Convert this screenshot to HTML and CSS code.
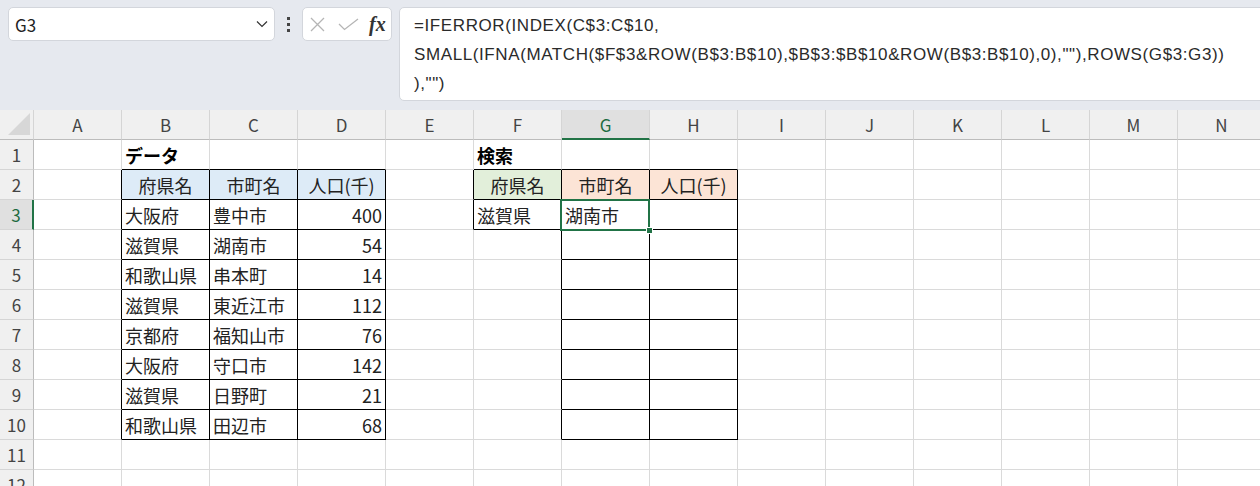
FILE: index.html
```html
<!DOCTYPE html>
<html lang="ja">
<head>
    <meta charset="UTF-8">
    <title>Sheet1</title>
    <link rel="stylesheet" href="styles.css">
</head>
<body>
<div class="topbar">
    <div class="namebox">
        <span>G3</span>
        <svg width="12" height="8" viewBox="0 0 12 8"><polyline points="1,1.5 6,6.5 11,1.5" fill="none" stroke="#333" stroke-width="1.2"/></svg>
    </div>
    <div class="grip"><i></i><i></i><i></i></div>
    <div class="fxbox">
        <svg class="cancel" width="15" height="15" viewBox="0 0 15 15"><path d="M1 1L14 14M14 1L1 14" stroke="#b5b5b5" stroke-width="1.3"/></svg>
        <svg class="enter" width="21" height="13" viewBox="0 0 21 13"><polyline points="1,6 6.5,11.5 20,1" fill="none" stroke="#b5b5b5" stroke-width="1.3"/></svg>
        <span class="fx">fx</span>
    </div>
    <div class="formula">
        <div>=IFERROR(INDEX(C$3:C$10,</div>
        <div>SMALL(IFNA(MATCH($F$3&amp;ROW(B$3:B$10),$B$3:$B$10&amp;ROW(B$3:B$10),0),""),ROWS(G$3:G3))</div>
        <div>),"")</div>
    </div>
</div>

<div class="sheet">
    <!-- 列見出し -->
    <div class="row">
        <div class="hd corner"></div>
        <div class="hd">A</div><div class="hd">B</div><div class="hd">C</div><div class="hd">D</div>
        <div class="hd">E</div><div class="hd">F</div><div class="hd sel">G</div><div class="hd">H</div>
        <div class="hd">I</div><div class="hd">J</div><div class="hd">K</div><div class="hd">L</div>
        <div class="hd">M</div><div class="hd">N</div>
    </div>

    <div class="row">
        <div class="rh">1</div>
        <div class="c"></div><div class="c bb b">データ</div><div class="c bb"></div><div class="c bb"></div>
        <div class="c"></div><div class="c bb b">検索</div><div class="c bb"></div><div class="c bb"></div>
        <div class="c"></div><div class="c"></div><div class="c"></div><div class="c"></div><div class="c"></div><div class="c"></div>
    </div>

    <div class="row">
        <div class="rh">2</div>
        <div class="c br"></div>
        <div class="c bk blue ctr">府県名</div><div class="c bk blue ctr">市町名</div><div class="c bk blue ctr">人口(千)</div>
        <div class="c br"></div>
        <div class="c bk green ctr">府県名</div><div class="c bk orange ctr">市町名</div><div class="c bk orange ctr">人口(千)</div>
        <div class="c"></div><div class="c"></div><div class="c"></div><div class="c"></div><div class="c"></div><div class="c"></div>
    </div>

    <div class="row">
        <div class="rh sel">3</div>
        <div class="c br"></div>
        <div class="c bk">大阪府</div><div class="c bk">豊中市</div><div class="c bk num">400</div>
        <div class="c br"></div>
        <div class="c bk">滋賀県</div><div class="c bk active">湖南市</div><div class="c bk"></div>
        <div class="c"></div><div class="c"></div><div class="c"></div><div class="c"></div><div class="c"></div><div class="c"></div>
    </div>

    <div class="row">
        <div class="rh">4</div>
        <div class="c br"></div>
        <div class="c bk">滋賀県</div><div class="c bk">湖南市</div><div class="c bk num">54</div>
        <div class="c"></div><div class="c br"></div><div class="c bk"></div><div class="c bk"></div>
        <div class="c"></div><div class="c"></div><div class="c"></div><div class="c"></div><div class="c"></div><div class="c"></div>
    </div>

    <div class="row">
        <div class="rh">5</div>
        <div class="c br"></div>
        <div class="c bk">和歌山県</div><div class="c bk">串本町</div><div class="c bk num">14</div>
        <div class="c"></div><div class="c br"></div><div class="c bk"></div><div class="c bk"></div>
        <div class="c"></div><div class="c"></div><div class="c"></div><div class="c"></div><div class="c"></div><div class="c"></div>
    </div>

    <div class="row">
        <div class="rh">6</div>
        <div class="c br"></div>
        <div class="c bk">滋賀県</div><div class="c bk">東近江市</div><div class="c bk num">112</div>
        <div class="c"></div><div class="c br"></div><div class="c bk"></div><div class="c bk"></div>
        <div class="c"></div><div class="c"></div><div class="c"></div><div class="c"></div><div class="c"></div><div class="c"></div>
    </div>

    <div class="row">
        <div class="rh">7</div>
        <div class="c br"></div>
        <div class="c bk">京都府</div><div class="c bk">福知山市</div><div class="c bk num">76</div>
        <div class="c"></div><div class="c br"></div><div class="c bk"></div><div class="c bk"></div>
        <div class="c"></div><div class="c"></div><div class="c"></div><div class="c"></div><div class="c"></div><div class="c"></div>
    </div>

    <div class="row">
        <div class="rh">8</div>
        <div class="c br"></div>
        <div class="c bk">大阪府</div><div class="c bk">守口市</div><div class="c bk num">142</div>
        <div class="c"></div><div class="c br"></div><div class="c bk"></div><div class="c bk"></div>
        <div class="c"></div><div class="c"></div><div class="c"></div><div class="c"></div><div class="c"></div><div class="c"></div>
    </div>

    <div class="row">
        <div class="rh">9</div>
        <div class="c br"></div>
        <div class="c bk">滋賀県</div><div class="c bk">日野町</div><div class="c bk num">21</div>
        <div class="c"></div><div class="c br"></div><div class="c bk"></div><div class="c bk"></div>
        <div class="c"></div><div class="c"></div><div class="c"></div><div class="c"></div><div class="c"></div><div class="c"></div>
    </div>

    <div class="row">
        <div class="rh">10</div>
        <div class="c br"></div>
        <div class="c bk">和歌山県</div><div class="c bk">田辺市</div><div class="c bk num">68</div>
        <div class="c"></div><div class="c br"></div><div class="c bk"></div><div class="c bk"></div>
        <div class="c"></div><div class="c"></div><div class="c"></div><div class="c"></div><div class="c"></div><div class="c"></div>
    </div>

    <div class="row">
        <div class="rh">11</div>
        <div class="c"></div><div class="c"></div><div class="c"></div><div class="c"></div><div class="c"></div><div class="c"></div><div class="c"></div>
        <div class="c"></div><div class="c"></div><div class="c"></div><div class="c"></div><div class="c"></div><div class="c"></div><div class="c"></div>
    </div>

    <div class="row">
        <div class="rh">12</div>
        <div class="c"></div><div class="c"></div><div class="c"></div><div class="c"></div><div class="c"></div><div class="c"></div><div class="c"></div>
        <div class="c"></div><div class="c"></div><div class="c"></div><div class="c"></div><div class="c"></div><div class="c"></div><div class="c"></div>
    </div>
</div>
</body>
</html>
```

FILE: styles.css
```css
body {
    margin: 0;
    height: 486px;
    overflow: hidden;
    background: #fff;
    font-family: "Noto Sans CJK JP", sans-serif;
    color: #222;
}

/* 数式バー */
.topbar {
    height: 110px;
    box-sizing: border-box;
    padding: 7px 0 0 8px;
    background: #e6e9ef;
    display: flex;
    align-items: flex-start;
}

.namebox {
    width: 267px;
    height: 34px;
    box-sizing: border-box;
    padding: 0 6px 0 6px;
    background: #fff;
    border: 1px solid #d3d6dc;
    border-radius: 5px;
    display: flex;
    align-items: center;
    justify-content: space-between;
    font-size: 17px;
}

.grip {
    width: 27px;
    padding-top: 10px;
    display: flex;
    flex-direction: column;
    align-items: center;
    gap: 3px;
}

.grip i {
    width: 3px;
    height: 3px;
    background: #444;
}

.fxbox {
    width: 90px;
    height: 34px;
    box-sizing: border-box;
    padding-left: 7px;
    background: #fff;
    border: 1px solid #d3d6dc;
    border-radius: 5px;
    display: flex;
    align-items: center;
}

.fxbox .enter {
    margin-left: 13px;
}

.fx {
    margin-left: 10px;
    font-family: "Liberation Serif", serif;
    font-style: italic;
    font-weight: bold;
    font-size: 20px;
    color: #333;
}

.formula {
    flex: 1;
    height: 94px;
    box-sizing: border-box;
    margin-left: 7px;
    margin-right: -10px;
    padding: 3px 0 0 14px;
    background: #fff;
    border: 1px solid #d3d6dc;
    border-radius: 5px;
    font-family: "Liberation Sans", sans-serif;
    font-size: 17px;
    letter-spacing: 0.6px;
    line-height: 29px;
    white-space: nowrap;
    color: #2a2a2a;
}

/* シート */
.sheet {
    display: grid;
    grid-template-columns: 34px repeat(14, 88px);
    grid-auto-rows: 30px;
}

.row {
    display: contents;
}

.hd, .rh, .c {
    box-sizing: border-box;
    display: flex;
    align-items: center;
    white-space: nowrap;
}

.hd {
    justify-content: center;
    background: #f0f0f0;
    border-right: 1px solid #d5d5d5;
    border-bottom: 1px solid #bcbcbc;
    font-size: 17px;
    color: #444;
}

.rh {
    justify-content: center;
    background: #f0f0f0;
    border-right: 1px solid #bcbcbc;
    border-bottom: 1px solid #d5d5d5;
    font-size: 17px;
    color: #444;
}

.corner {
    position: relative;
}

.corner::after {
    content: "";
    position: absolute;
    left: 8px;
    top: 3px;
    width: 22px;
    height: 22px;
    background: #d7d7d7;
    clip-path: polygon(100% 0, 100% 100%, 0 100%);
}

.hd.sel {
    background: #e0e0e0;
    color: #1d6b41;
    border-bottom: 2px solid #217346;
}

.rh.sel {
    background: #e0e0e0;
    color: #1d6b41;
    border-right: 2px solid #217346;
}

.c {
    padding: 0 3px;
    border-right: 1px solid #dadada;
    border-bottom: 1px solid #dadada;
    font-size: 18px;
}

.b {
    font-weight: bold;
    color: #000;
}

.num {
    justify-content: flex-end;
}

.ctr {
    justify-content: center;
}

/* 罫線 */
.bk {
    border-right-color: #000;
    border-bottom-color: #000;
}

.br {
    border-right-color: #000;
}

.bb {
    border-bottom-color: #000;
}

/* 塗りつぶし */
.blue {
    background: #ddebf7;
}

.green {
    background: #e2efda;
}

.orange {
    background: #fce4d6;
}

/* アクティブセル */
.active {
    position: relative;
}

.active::after {
    content: "";
    position: absolute;
    left: -2px;
    top: -1px;
    right: -1px;
    bottom: -2px;
    border: 2px solid #217346;
}

.active::before {
    content: "";
    position: absolute;
    right: -4px;
    bottom: -5px;
    width: 5px;
    height: 5px;
    background: #217346;
    border: 1px solid #fff;
    z-index: 1;
}
```
